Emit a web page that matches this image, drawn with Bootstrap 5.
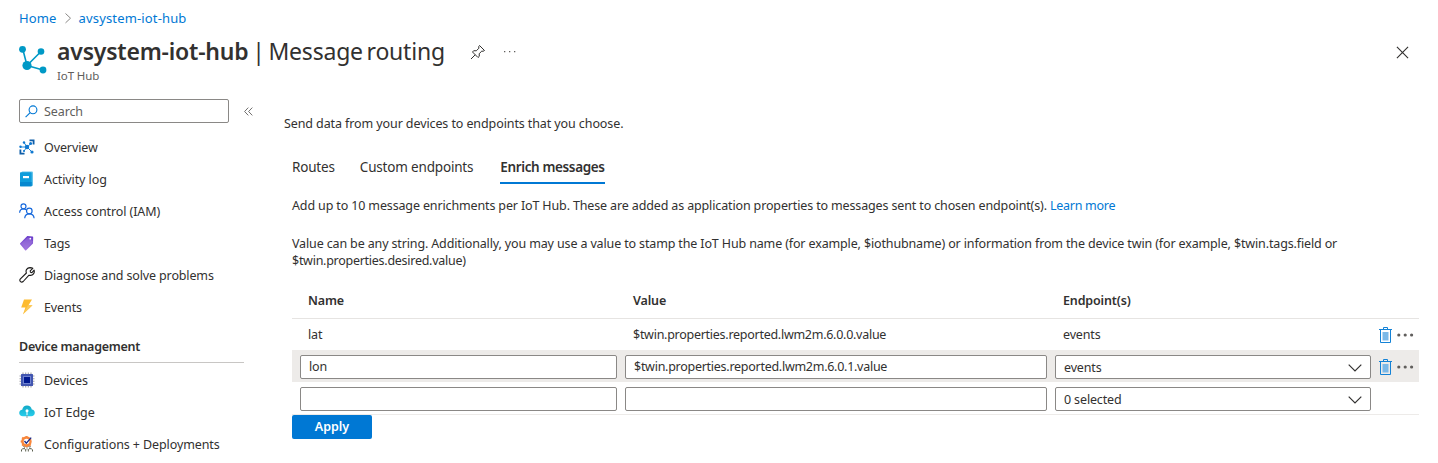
<!DOCTYPE html>
<html lang="en">
<head>
<meta charset="utf-8">
<meta name="viewport" content="width=device-width, initial-scale=1">
<title>avsystem-iot-hub | Message routing</title>
<link rel="stylesheet" href="https://cdn.jsdelivr.net/npm/bootstrap@5.3.0/dist/css/bootstrap.min.css">
<script src="https://cdn.jsdelivr.net/npm/bootstrap@5.3.0/dist/js/bootstrap.bundle.min.js" defer></script>
<style>
  body { font-family: "Noto Sans", "Open Sans", sans-serif; font-size: 12.5px; line-height: 16px; color: #323130; background: #fff; height: 463px; overflow: hidden; letter-spacing: -.1px; }
  a { color: #0078d4; text-decoration: none; }
  svg { display: block; flex: none; }
  .crumbs { height: 36px; padding: 0 19px; gap: 7px; font-size: 13px; letter-spacing: .15px; }
  .page-head { height: 56px; padding: 0 29px 0 19px; }
  .page-head h1 { font-size: 23px; line-height: 31px; margin: 0; font-weight: 400; white-space: nowrap; letter-spacing: -.22px; word-spacing: -2px; }
  .page-head h1 b { font-weight: 600; letter-spacing: -.2px; }
  .name-box { margin-left: 9px; }
  .kind { font-size: 11.5px; line-height: 16px; color: #605e5c; padding-top: 1px; }
  .hub-logo { margin-top: 9px; }
  .pin { margin: 8px 0 0 25px; }
  .more { margin: 14px 0 0 18px; }
  .shut { margin-top: 10px; }
  .side { width: 265px; padding: 7px 0 0 19px; }
  .search { width: 210px; height: 24px; border: 1px solid #8a8886; border-radius: 2px; padding: 1px 5px 0; gap: 6px; color: #605e5c; margin-right: 15px; }
  .side-group { padding-top: 9px; }
  .side-item { height: 32px; gap: 9px; white-space: nowrap; }
  .side-item svg { margin-top: -3px; }
  .side-title { font-weight: 600; height: 39px; width: 225px; border-bottom: 1px solid #c8c6c4; padding-top: 15px; margin-bottom: 2px; letter-spacing: -.26px; }
  .main { padding: 24px 19px 0 19px; }
  .tab-row { gap: 26px; font-size: 13.5px; line-height: 20px; padding-left: 8px; margin-top: 25px; letter-spacing: -.18px; }
  .tab-row span { padding-bottom: 5px; border-bottom: 2px solid transparent; }
  .tab-row span:first-child { margin-right: -1px; }
  .tab-row .on { font-weight: 600; border-color: #0078d4; letter-spacing: -.37px; margin-left: 1px; }
  .pane { padding-left: 8px; padding-top: 14px; letter-spacing: -.14px; }
  .pane p { margin: 0 0 22px; white-space: nowrap; }
  .pane p.hint { line-height: 16.5px; margin: 0; }
  .pane p a, .tight { letter-spacing: -.27px; }
  .grid-table { table-layout: fixed; width: 1127px; margin: 14px 0 0; border-collapse: separate; border-spacing: 0; }
  .grid-table th, .grid-table td { height: 32px; padding: 0 4px; vertical-align: middle; }
  .grid-table th { height: 36px; font-weight: 600; border-bottom: 1px solid #e6e4e2; }
  .grid-table th:first-child, .grid-table td:first-child { padding-left: 8px; }
  .grid-table .txt { padding-left: 8px; display: block; }
  .grid-table .first td { height: 31px; }
  .grid-table .hot td { background: #edebe9; }
  .grid-table .edit td { padding-top: 5px; padding-bottom: 3px; }
  .grid-table .last td { border-bottom: 1px solid #edebe9; height: 33px; }
  .field { height: 24px; border: 1px solid #8a8886; border-radius: 2px; background: #fff; padding: 0 8px; }
  .field.pick { padding-top: 1px; }
  .acts { gap: 5px; }
  .hot .acts { margin-top: -1px; }
  .go { width: 80px; height: 24px; background: #0078d4; color: #fff; font-weight: 600; border-radius: 2px; border: 0; padding: 0; font-size: 12.5px; line-height: 24px; letter-spacing: 0; display: block; }
</style>
</head>
<body>
<svg width="0" height="0" class="position-absolute">
  <defs>
    <symbol id="bin" viewBox="0 0 13 16"><path d="M3.500 5h6v8.500h-6z" fill="#7cb9e8"/><path d="M0 2.500h13M1.500 3v12.500h10V3M4.500 2V.500h4V2" fill="none" stroke="#1482d6" stroke-width="1"/></symbol>
    <symbol id="dots" viewBox="0 0 17 4"><g fill="#605e5c"><circle cx="1.800" cy="2" r="1.600"/><circle cx="8.200" cy="2" r="1.600"/><circle cx="14.600" cy="2" r="1.600"/></g></symbol>
    <symbol id="down" viewBox="0 0 14 8"><path d="m.7.700 6.300 6.300 6.300-6.300" fill="none" stroke="#323130" stroke-width="1.200"/></symbol>
  </defs>
</svg>
<nav class="crumbs d-flex align-items-center">
  <a href="#">Home</a>
  <svg width="8" height="12" viewBox="0 0 8 12" fill="none" stroke="#8a8886"><path d="M1.500 1.500 6.500 6.200l-5 4.700"/></svg>
  <a href="#">avsystem-iot-hub</a>
</nav>
<header class="page-head d-flex align-items-start">
  <svg class="hub-logo" width="29" height="31" viewBox="0 0 29 31" fill="#0099c6" stroke="#0099c6"><path d="M4 5 8 20.500 22 6.500M8 20.500l16 4.500" fill="none" stroke-width="1.600"/><g stroke="none"><circle cx="3.500" cy="4.300" r="3.400"/><circle cx="22" cy="6.500" r="3.300"/><circle cx="8" cy="20.500" r="4.600"/><circle cx="24" cy="25" r="3.400"/></g></svg>
  <div class="name-box">
    <h1><b>avsystem-iot-hub</b> | Message routing</h1>
    <div class="kind">IoT Hub</div>
  </div>
  <svg class="pin" width="16" height="16" viewBox="0 0 16 16" fill="none" stroke="#323130"><path d="m9.500 1.500 5 5-1.500.8-1.200-.2-2.600 2.600.1 2.600-1.300 1.200-5.500-5.500L3.700 6.700l2.600.1 2.600-2.600-.2-1.500zM5.200 10.800 1 15"/></svg>
  <svg class="more" width="12" height="4" viewBox="0 0 12 4" fill="#605e5c"><path d="M0 1h1.300v1.300H0zM5 1h1.300v1.300H5zM10 1h1.300v1.300H10z"/></svg>
  <svg class="ms-auto shut" width="13" height="13" viewBox="0 0 14 14" stroke="#323130" stroke-width="1.200"><path d="m1 1 12 12M13 1 1 13"/></svg>
</header>
<div class="d-flex">
  <aside class="side flex-shrink-0">
    <div class="d-flex align-items-center">
      <div class="search d-flex align-items-center">
        <svg width="13" height="13" viewBox="0 0 13 13" fill="none" stroke="#0078d4" stroke-width="1.100"><circle cx="8" cy="4.800" r="3.900"/><path d="M5.200 7.600.6 12.200"/></svg>
        <span>Search</span>
      </div>
      <svg width="9" height="9" viewBox="0 0 9 9" fill="none" stroke="#605e5c" stroke-width=".9"><path d="M4.300.600.600 4.500l3.700 3.900M8.300.600 4.600 4.500l3.700 3.900"/></svg>
    </div>
    <div class="side-group">
      <div class="side-item d-flex align-items-center">
        <svg width="16" height="16" viewBox="0 0 16 16"><path d="M10.500.500h5v5h-1.800V2.300h-3.200zM.5 10.500h1.800v3.200h3.200v1.800h-5z" fill="#0f5ea8"/><path d="M1 8h7M8 8 5 3.500M8 8l3.500-3M8 8l-3 4M8 8l5 5" stroke="#1a86d8" stroke-width="1"/><g fill="#0f78d0"><circle cx="8" cy="8" r="2.200"/><circle cx="5" cy="3.500" r="1.200"/><circle cx="11.600" cy="4.600" r="1.500"/><circle cx="5" cy="12" r="1.100"/><circle cx="13" cy="13" r="1.600"/><circle cx="1.500" cy="7.800" r="1.200"/></g></svg>
        <span>Overview</span></div>
      <div class="side-item d-flex align-items-center">
        <svg width="16" height="16" viewBox="0 0 16 16"><rect x="2.500" y=".500" width="11.500" height="14.500" rx="1" fill="#66c4ea" /><rect x="1" y="1.300" width="11.700" height="14" rx=".8" fill="#0f9ddb"/><path d="M1 11h11.700v4.300H1z" fill="#0788cf"/><rect x="4" y="5" width="6" height="2.200" fill="#fff"/></svg>
        <span>Activity log</span></div>
      <div class="side-item d-flex align-items-center">
        <svg width="16" height="16" viewBox="0 0 16 16" fill="none" stroke="#1668dc" stroke-width="1.200"><circle cx="4.500" cy="3.300" r="2.500"/><path d="M.6 9.800c.1-2.500 1.700-4 3.900-4 1 0 1.900.4 2.600 1"/><circle cx="10.300" cy="8" r="2.800"/><path d="M5.700 15.200c.2-2.800 2-4.400 4.600-4.400s4.600 1.600 4.800 4.400"/></svg>
        <span>Access control (IAM)</span></div>
      <div class="side-item d-flex align-items-center">
        <svg width="16" height="16" viewBox="0 0 16 16"><defs><linearGradient id="tg" x2="0" y2="1"><stop stop-color="#6638c9"/><stop offset="1" stop-color="#a67be0"/></linearGradient></defs><path d="M8.300.900 13.500 1.500q.8.100.7.900l-.2 6.100-6.800 6.800q-.6.500-1.100 0L1.200 9.300q-.5-.6 0-1.100z" fill="url(#tg)"/><path d="m2 8.800 7-6.500 5 4.500-7 7z" fill="#a47ddc" opacity=".45"/><circle cx="11.300" cy="3.700" r=".9" fill="#fff"/></svg>
        <span>Tags</span></div>
      <div class="side-item d-flex align-items-center">
        <svg width="16" height="16" viewBox="0 0 16 16" fill="none" stroke="#1b1a19" stroke-width="1.100" stroke-linejoin="round"><path d="M13.800 1.300 11.200 3.900l.3 1.400 1.400.3 2.200-2.400c.8 2.800-1.100 5.300-3.800 5.200-.5 0-.9-.1-1.300-.2l-5.800 6.300c-1.800 1.700-4.600-.7-2.800-2.600l6-5.900C6.300 3.300 8 .700 11 .600c1 0 1.900.2 2.800.7z"/></svg>
        <span class="tight" style="letter-spacing:-.14px">Diagnose and solve problems</span></div>
      <div class="side-item d-flex align-items-center">
        <svg width="16" height="16" viewBox="0 0 16 16"><path d="M5 .500h8L9.500 6.200h4L4 15.200l2.400-6.700H2.200z" fill="#fdbb30"/><path d="M9 6.200h4.500L4 15.200z" fill="#fbc95a"/></svg>
        <span>Events</span></div>
    </div>
    <div class="side-title">Device management</div>
    <div class="side-item d-flex align-items-center">
      <svg width="16" height="16" viewBox="0 0 16 16"><path d="M4 .500v15M6.700.500v15M9.300.500v15M12 .500v15M.5 4h15M.5 6.700h15M.5 9.300h15M.5 12h15" stroke="#a0a0a6" stroke-width="1.100"/><rect x="2" y="2" width="12" height="12" rx=".5" fill="#4256b0"/><path d="M4 4h8v8H4z" fill="#6f82d0"/><path d="M5 5h6v6H5z" fill="#00188f"/></svg>
      <span>Devices</span></div>
    <div class="side-item d-flex align-items-center">
      <svg width="16" height="16" viewBox="0 0 16 16"><defs><linearGradient id="cl" x2="0" y2="1"><stop stop-color="#12a9c6"/><stop offset="1" stop-color="#27cdec"/></linearGradient></defs><path d="M4 12.300C1.600 12.300.200 10.800.200 9c0-1.700 1.200-3 3-3.200C3.700 3 5.600 1.500 8 1.500c2.500 0 4.300 1.600 4.800 4 1.800.2 3 1.600 3 3.300 0 2-1.500 3.500-3.600 3.500z" fill="url(#cl)"/><circle cx="8" cy="6.800" r="1.500" fill="#fff"/><path d="M8 7v4" stroke="#fff" stroke-width="1"/><path d="M8 11V14" stroke="#8fa5ad" stroke-width="1"/></svg>
      <span>IoT Edge</span></div>
    <div class="side-item d-flex align-items-center">
      <svg width="16" height="16" viewBox="0 0 16 16"><path d="M4 10.500h8M5.500 11v2M10.800 11v2M8 11v3" stroke="#a0a09a" stroke-width="1"/><path d="M2.500 15.500v-1.800l1.300-1h1.600l1.300 1v1.800M9.300 15.500v-1.800l1.300-1h1.600l1.300 1v1.800" fill="none" stroke="#5b5f4e"/><circle cx="7.500" cy="5.500" r="4" fill="#fff" stroke="#f8873c" stroke-width="2.400"/><path d="M7.500 0v2M7.500 9v2.300M1.700 5.500h2M3.200 1.500l1.400 1.400M3.200 9.600l1.400-1.400M11.600 9.600l-1.400-1.400" stroke="#f8873c" stroke-width="2"/><path d="m5.500 5 1.800 2.200 4.900-5.600" fill="none" stroke="#1b2a88" stroke-width="1.300"/></svg>
      <span>Configurations + Deployments</span></div>
  </aside>
  <main class="main flex-grow-1">
    <div>Send data from your devices to endpoints that you choose.</div>
    <div class="tab-row d-flex"><span>Routes</span><span>Custom endpoints</span><span class="on">Enrich messages</span></div>
    <div class="pane">
      <p>Add up to 10 message enrichments per IoT Hub. These are added as application properties to messages sent to chosen endpoint(s). <a href="#">Learn more</a></p>
      <p class="hint">Value can be any string. Additionally, you may use a value to stamp the IoT Hub name (for example, $iothubname) or information from the device twin (for example, $twin.tags.field or<br><span class="tight">$twin.properties.desired.value)</span></p>
      <table class="grid-table">
        <colgroup><col style="width:329px"><col style="width:430px"><col style="width:324px"><col style="width:44px"></colgroup>
        <thead>
          <tr><th><span class="txt">Name</span></th><th><span class="txt">Value</span></th><th><span class="txt">Endpoint(s)</span></th><th></th></tr>
        </thead>
        <tbody>
          <tr class="first">
            <td><span class="txt">lat</span></td>
            <td><span class="txt tight">$twin.properties.reported.lwm2m.6.0.0.value</span></td>
            <td><span class="txt">events</span></td>
            <td><div class="acts d-flex align-items-center"><svg width="13" height="16"><use href="#bin"/></svg><svg width="17" height="4"><use href="#dots"/></svg></div></td>
          </tr>
          <tr class="hot edit">
            <td><div class="field d-flex align-items-center">lon</div></td>
            <td><div class="field tight d-flex align-items-center">$twin.properties.reported.lwm2m.6.0.1.value</div></td>
            <td><div class="field pick d-flex align-items-center justify-content-between">events<svg width="14" height="8"><use href="#down"/></svg></div></td>
            <td><div class="acts d-flex align-items-center"><svg width="13" height="16"><use href="#bin"/></svg><svg width="17" height="4"><use href="#dots"/></svg></div></td>
          </tr>
          <tr class="last edit">
            <td><div class="field"></div></td>
            <td><div class="field"></div></td>
            <td><div class="field pick d-flex align-items-center justify-content-between">0 selected<svg width="14" height="8"><use href="#down"/></svg></div></td>
            <td></td>
          </tr>
        </tbody>
      </table>
      <button class="go" type="button">Apply</button>
    </div>
  </main>
</div>
</body>
</html>
